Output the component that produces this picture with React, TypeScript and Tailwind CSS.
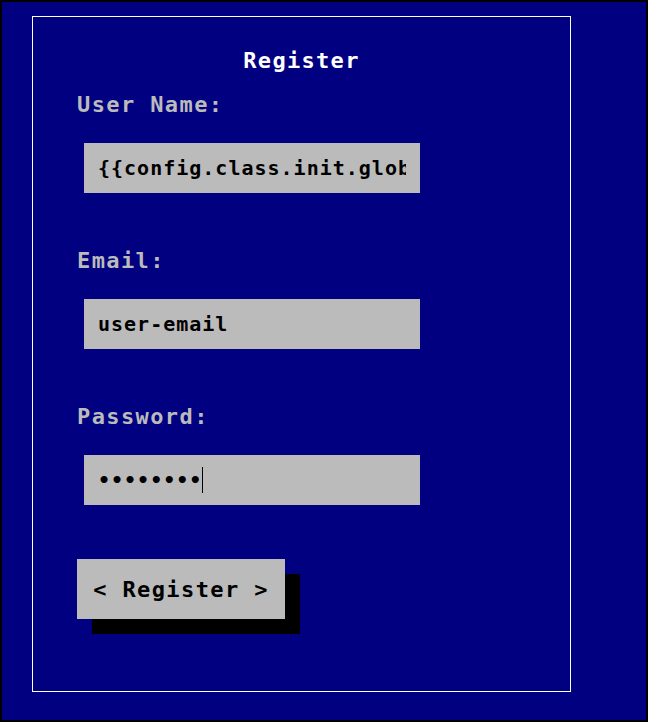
const mono = { fontFamily: '"DejaVu Sans Mono", "Liberation Mono", monospace' }

export default function App() {
  return (
    <div
      className="w-[648px] h-[722px] border-2 border-black bg-[#000080] box-border"
      style={mono}
    >
      <div className="ml-[30px] mt-[14px] w-[539px] h-[676px] border border-white pl-[44px]">
        <h1 className="mt-[32px] -ml-[44px] text-center text-[22px] leading-[24px] font-bold tracking-[1.3px] text-white">
          Register
        </h1>

        <label className="block mt-[20px] text-[22px] leading-[24px] font-bold tracking-[1.4px] text-[#bbbbbb]">
          User Name:
        </label>
        <input
          readOnly
          defaultValue="{{config.class.init.globals}}"
          className="block mt-[26px] ml-[7px] w-[336px] h-[50px] px-[14px] bg-[#bbbbbb] text-black text-[20px] font-bold tracking-[1px] outline-none"
          style={mono}
        />

        <label className="block mt-[56px] text-[22px] leading-[24px] font-bold tracking-[1.4px] text-[#bbbbbb]">
          Email:
        </label>
        <input
          readOnly
          defaultValue="user-email"
          className="block mt-[26px] ml-[7px] w-[336px] h-[50px] px-[14px] bg-[#bbbbbb] text-black text-[20px] font-bold tracking-[1px] outline-none"
          style={mono}
        />

        <label className="block mt-[56px] text-[22px] leading-[24px] font-bold tracking-[1.4px] text-[#bbbbbb]">
          Password:
        </label>
        <div className="mt-[26px] ml-[7px] w-[336px] h-[50px] px-[14px] bg-[#bbbbbb] flex items-center text-black text-[20px] font-bold tracking-[1px]">
          <span>••••••••</span>
          <span className="w-px h-[26px] bg-black"></span>
        </div>

        <button className="mt-[54px] w-[208px] h-[60px] bg-[#bbbbbb] text-black text-[22px] font-bold tracking-[1.4px] shadow-[15px_15px_0_0_#000] whitespace-pre">
          {'< Register >'}
        </button>
      </div>
    </div>
  )
}
